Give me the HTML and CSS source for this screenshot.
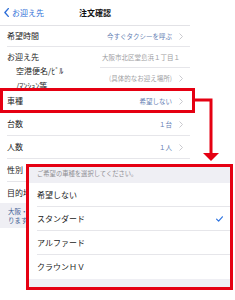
FILE: index.html
```html
<!DOCTYPE html>
<html lang="ja">
<head>
<meta charset="utf-8">
<link rel="stylesheet" href="styles.css">
</head>
<body>
<div class="screen">
  <header class="nav">
    <span class="back"><svg class="back-ico" viewBox="0 0 5 9" width="5" height="9"><path d="M4.3 0.6 L0.9 4.5 L4.3 8.4" fill="none" stroke="#2f6fd8" stroke-width="1.4" stroke-linecap="round" stroke-linejoin="round"/></svg>お迎え先</span>
    <span class="title">注文確認</span>
    <span></span>
  </header>
  <div class="list">
    <div class="row first"><span class="label">希望時間</span><span class="value">今すぐタクシーを呼ぶ</span><svg class="chev" viewBox="0 0 4 7" width="4" height="7"><path d="M0.5 0.5 L3.5 3.5 L0.5 6.5" fill="none" stroke="#c4c4c9" stroke-width="0.9"/></svg></div>
    <div class="row addr"><span class="label">お迎え先</span><span class="value gray">大阪市北区堂島浜１丁目１</span></div>
    <div class="row sub"><span class="label sublabel">空港便名/ﾋﾞﾙ<br>/ﾏﾝｼｮﾝ等</span><span class="value gray">(具体的なお迎え場所)</span><svg class="chev" viewBox="0 0 4 7" width="4" height="7"><path d="M0.5 0.5 L3.5 3.5 L0.5 6.5" fill="none" stroke="#c4c4c9" stroke-width="0.9"/></svg></div>
    <div class="row"><span class="label">車種</span><span class="value">希望しない</span><svg class="chev" viewBox="0 0 4 7" width="4" height="7"><path d="M0.5 0.5 L3.5 3.5 L0.5 6.5" fill="none" stroke="#c4c4c9" stroke-width="0.9"/></svg></div>
    <div class="row"><span class="label">台数</span><span class="value">１台</span><svg class="chev" viewBox="0 0 4 7" width="4" height="7"><path d="M0.5 0.5 L3.5 3.5 L0.5 6.5" fill="none" stroke="#c4c4c9" stroke-width="0.9"/></svg></div>
    <div class="row"><span class="label">人数</span><span class="value">１人</span><svg class="chev" viewBox="0 0 4 7" width="4" height="7"><path d="M0.5 0.5 L3.5 3.5 L0.5 6.5" fill="none" stroke="#c4c4c9" stroke-width="0.9"/></svg></div>
    <div class="row"><span class="label">性別</span><span class="value">指定なし</span><svg class="chev" viewBox="0 0 4 7" width="4" height="7"><path d="M0.5 0.5 L3.5 3.5 L0.5 6.5" fill="none" stroke="#c4c4c9" stroke-width="0.9"/></svg></div>
    <div class="row last"><span class="label">目的地</span><span class="value">未設定</span><svg class="chev" viewBox="0 0 4 7" width="4" height="7"><path d="M0.5 0.5 L3.5 3.5 L0.5 6.5" fill="none" stroke="#c4c4c9" stroke-width="0.9"/></svg></div>
  </div>
  <div class="note">大阪・神戸エリアのみご利用可能とな<br>ります。</div>
</div>

<div class="hl-box"></div>
<svg class="arrow" viewBox="0 0 30 68" width="30" height="68">
  <path d="M2 4 L18 4 L18 58" fill="none" stroke="#e50012" stroke-width="3"/>
  <polygon points="10,57 26,57 18,65" fill="#e50012"/>
</svg>

<div class="panel">
  <div class="panel-head">ご希望の車種を選択してください。</div>
  <div class="opt">希望しない</div>
  <div class="opt">スタンダード<svg class="check" viewBox="0 0 7 6" width="7" height="6"><path d="M0.6 3.2 L2.6 5.2 L6.4 0.8" fill="none" stroke="#2f74e0" stroke-width="1.2" stroke-linecap="round" stroke-linejoin="round"/></svg></div>
  <div class="opt">アルファード</div>
  <div class="opt lastopt">クラウンＨＶ</div>
  <div class="panel-foot"></div>
</div>
</body>
</html>
```

FILE: styles.css
```css
html, body {
  margin: 0;
  padding: 0;
}
body {
  font-family: "Noto Sans CJK JP", "Noto Sans", sans-serif;
  background: #ffffff;
  position: relative;
  width: 235px;
  height: 300px;
  overflow: hidden;
  color: #222;
}
.screen {
  width: 190px;
}
.nav {
  display: grid;
  grid-template-columns: 1fr auto 1fr;
  align-items: center;
  height: 25px;
  border-bottom: 1px solid #e2e2e6;
}
.back {
  display: flex;
  align-items: center;
  gap: 3px;
  padding-left: 4px;
  color: #2f6fd8;
  font-size: 8px;
  line-height: 1;
}
.back-ico {
  display: block;
}
.title {
  font-size: 8px;
  line-height: 1;
  font-weight: bold;
  color: #111;
}
.row {
  display: flex;
  align-items: center;
  height: 22px;
  margin-left: 7px;
  padding-right: 7px;
  border-bottom: 1px solid #e6e6ea;
}
.row.first {
  height: 20px;
}
.row.addr {
  height: 20px;
  border-bottom: none;
  padding-right: 10px;
}
.row.sub {
  height: 22px;
  background: linear-gradient(#e6e6ea, #e6e6ea) no-repeat right top / 90px 1px;
}
.row.last {
  height: 21px;
  border-bottom: none;
}
.label {
  flex: 1;
  font-size: 8px;
  line-height: 1;
  color: #222;
}
.sublabel {
  padding-left: 9px;
  line-height: 15px;
}
.value {
  font-size: 6.5px;
  line-height: 1;
  color: #6580b3;
}
.value.gray {
  color: #9d9da2;
}
.chev {
  display: block;
  margin-left: 7px;
}
.note {
  height: 25px;
  box-sizing: border-box;
  background: #efeff4;
  padding: 4px 8px 0;
  font-size: 6.5px;
  line-height: 9px;
  color: #3e5f95;
}
.hl-box {
  position: absolute;
  left: 0;
  top: 88px;
  width: 195px;
  height: 25px;
  box-sizing: border-box;
  border: 3px solid #e50012;
}
.arrow {
  position: absolute;
  left: 193px;
  top: 96px;
  display: block;
}
.panel {
  position: absolute;
  left: 26px;
  top: 164px;
  width: 207px;
  height: 126px;
  box-sizing: border-box;
  border: 3px solid #e50012;
  background: #fff;
  display: flex;
  flex-direction: column;
}
.panel-head {
  height: 16px;
  box-sizing: border-box;
  padding: 0 0 2px 8px;
  background: #efeff4;
  display: flex;
  align-items: center;
  font-size: 6.3px;
  line-height: 1;
  color: #8e8e93;
}
.opt {
  height: 24px;
  box-sizing: border-box;
  margin-left: 8px;
  padding-right: 7px;
  display: flex;
  align-items: center;
  justify-content: space-between;
  border-bottom: 1px solid #e6e6ea;
  font-size: 8px;
  line-height: 1;
  color: #222;
}
.opt.lastopt {
  border-bottom: none;
}
.check {
  display: block;
}
.panel-foot {
  flex: 1;
  background: #efeff4;
}
```
